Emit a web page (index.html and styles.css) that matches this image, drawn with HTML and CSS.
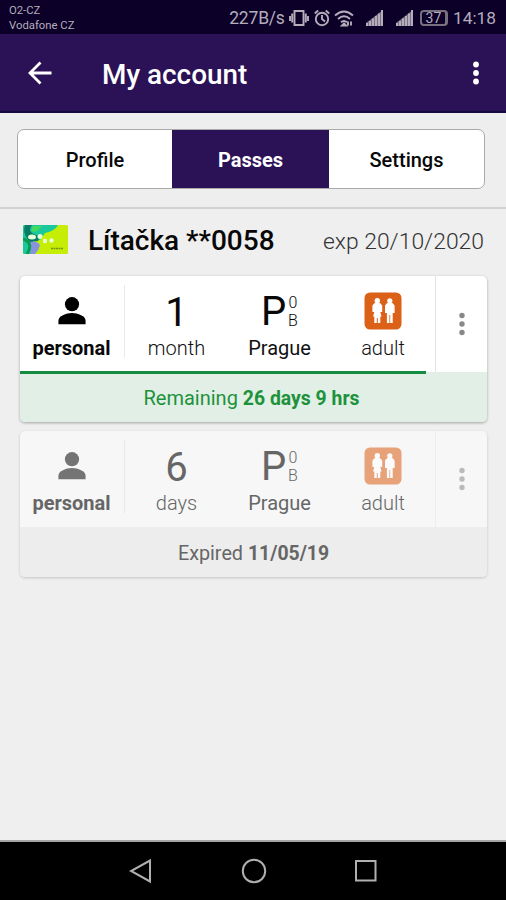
FILE: index.html
```html
<!DOCTYPE html>
<html lang="en">
<head>
<meta charset="utf-8">
<title>My account</title>
<link rel="stylesheet" href="styles.css">
</head>
<body>
<svg class="symbols" aria-hidden="true">
  <symbol id="person" viewBox="0 0 28 28"><circle cx="14" cy="7.2" r="7.1"/><path d="M.4 27.2v-3.500C.4 19 8 15.900 14 15.900s13.600 3.100 13.600 7.800v3.500z"/></symbol>
  <symbol id="adult" viewBox="0 0 38 38"><rect x=".5" y=".5" width="37" height="37" rx="5.500" fill="#dc6118"/><g fill="#fff"><circle cx="13.300" cy="8.800" r="2.700"/><path d="M10.600 11h5.400l2.200 2.500V20h-1.900l1.300 4.500h-1.300V31h-2.500v-5h-1v5h-2.500v-6.500H9L10.300 20H8.400v-6.500z"/><circle cx="25.800" cy="8.800" r="2.600"/><path d="M23.100 11h5.400l2.100 2.500V21h-1.900v10h-2.500v-8h-.8v8h-2.500V21H21v-7.500z"/></g></symbol>
  <symbol id="signal" viewBox="0 0 18 18"><path d="M0 14h2v3H0zM3 12h2v5H3zM6 9.500h2V17H6zM9 7h2v10H9zM12 4.500h2V17h-2zM15 1h2v16h-2z"/><path opacity=".65" d="M0 14 17 1v16H0z"/></symbol>
</svg>

<header class="status">
  <div class="carriers"><span>O2-CZ</span><span>Vodafone CZ</span></div>
  <span class="speed">227B/s</span>
  <svg class="vibrate" width="20" height="18" viewBox="0 0 20 18"><path d="M5.500 2h9v14h-9zM3.200 4.500v9M16.800 4.500v9M1 7v5M19 7v5"/></svg>
  <svg class="alarm" width="16" height="18" viewBox="0 0 16 18"><circle cx="8" cy="10" r="6.200"/><path d="M8 6v4l3 2.500M.8 4.500 4.200 1.500M15.200 4.500l-3.400-3"/></svg>
  <svg class="wifi" width="20" height="18" viewBox="0 0 20 18"><path d="M1 6.500Q10-1.500 19 6.500M4 10q6-5.300 12 0M7 13.300q3-2.700 6 0"/><path d="m10 14.500 2 2h-4zM14 12.500v4M17 12.500v4"/></svg>
  <svg class="signal one" width="18" height="18"><use href="#signal"/></svg>
  <svg class="signal two" width="18" height="18"><use href="#signal"/></svg>
  <span class="battery">37</span>
  <span class="clock">14:18</span>
</header>

<nav class="appbar">
  <svg class="back" width="24" height="24" viewBox="0 0 24 24"><path d="M23.500 12H2M12.500 1.500 2 12l10.500 10.500"/></svg>
  <h1><span>My account</span></h1>
  <svg class="more" width="8" height="24" viewBox="0 0 8 24"><circle cx="4" cy="3.500" r="2.900"/><circle cx="4" cy="12" r="2.900"/><circle cx="4" cy="20.500" r="2.900"/></svg>
</nav>

<section class="tabbar">
  <div class="tabs">
    <div class="tab">Profile</div>
    <div class="tab active">Passes</div>
    <div class="tab">Settings</div>
  </div>
</section>

<main>
  <div class="holder">
    <svg class="cardpic" width="45" height="29" viewBox="0 0 45 29">
      <defs><clipPath id="round"><rect width="45" height="29" rx="1.500"/></clipPath></defs>
      <g clip-path="url(#round)">
        <path fill="#c5ed06" d="M0 0h45v29H0z"/>
        <path fill="#19c99c" d="M0 0h35q-3 6-13 8l-5 7-7 1 4 7-5 6H0z"/>
        <path fill="#087b65" d="M2 0h7q-4 5 0 8t9 3l-3 5-8 1Q-1 9 2 0z"/>
        <path fill="#43d95d" d="M10 1h9l-5 5-4 1Q7 5 10 1z"/>
        <path fill="#8793df" d="M5 18q8-4 12 2-1 5-5 9H7q2-6-2-11z"/>
        <path fill="none" stroke="#099b4d" stroke-width="3" d="M0 14q11 4 4 15"/>
        <g fill="#e5ffd8"><ellipse cx="9" cy="12" rx="4" ry="2.500"/><circle cx="17" cy="11.500" r="2.500"/><circle cx="22" cy="16" r="2.200"/><circle cx="28.500" cy="15.500" r="2.200"/></g>
        <path stroke="#759b16" stroke-width="1.500" stroke-dasharray="2 .5" d="M28 23.500h12"/>
      </g>
    </svg>
    <h2>Lítačka **0058</h2>
    <span class="exp">exp 20/10/2020</span>
  </div>

  <article class="pass">
    <div class="cells">
      <div class="cell who"><div class="top"><svg width="28" height="28"><use href="#person"/></svg></div><b>personal</b></div>
      <div class="cell"><div class="top num">1</div><span>month</span></div>
      <div class="cell"><div class="top zone"><span>P</span><span class="bands"><i>0</i><i>B</i></span></div><span class="prague">Prague</span></div>
      <div class="cell"><div class="top"><svg width="38" height="38"><use href="#adult"/></svg></div><span>adult</span></div>
      <div class="menu"><svg width="6" height="24" viewBox="0 0 6 24"><circle cx="3" cy="3.500" r="2.700"/><circle cx="3" cy="12" r="2.700"/><circle cx="3" cy="20.500" r="2.700"/></svg></div>
    </div>
    <div class="foot"><span>Remaining <b>26 days 9 hrs</b></span></div>
  </article>

  <article class="pass expired">
    <div class="cells">
      <div class="cell who"><div class="top"><svg width="28" height="28"><use href="#person"/></svg></div><b>personal</b></div>
      <div class="cell"><div class="top num">6</div><span>days</span></div>
      <div class="cell"><div class="top zone"><span>P</span><span class="bands"><i>0</i><i>B</i></span></div><span class="prague">Prague</span></div>
      <div class="cell"><div class="top"><svg width="38" height="38"><use href="#adult"/></svg></div><span>adult</span></div>
      <div class="menu"><svg width="6" height="24" viewBox="0 0 6 24"><circle cx="3" cy="3.500" r="2.700"/><circle cx="3" cy="12" r="2.700"/><circle cx="3" cy="20.500" r="2.700"/></svg></div>
    </div>
    <div class="foot"><span>Expired <b>11/05/19</b></span></div>
  </article>
</main>

<footer class="sysnav">
  <svg width="24" height="26" viewBox="0 0 24 26"><path d="M21 2.500v21L2 13z"/></svg>
  <svg width="26" height="26" viewBox="0 0 26 26"><circle cx="13" cy="13" r="11.200"/></svg>
  <svg width="24" height="24" viewBox="0 0 24 24"><path d="M2 2h19.500v19.500H2z"/></svg>
</footer>
</body>
</html>
```
FILE: styles.css
```css
* { box-sizing: border-box; }
body {
  margin: 0;
  width: 506px;
  height: 900px;
  display: flex;
  flex-direction: column;
  overflow: hidden;
  background: #efefef;
  color: #080808;
  font-family: Roboto, "Liberation Sans", sans-serif;
}
h1, h2 { margin: 0; font-weight: 500; }
i { font-style: normal; }
b { font-weight: 700; }
svg { display: block; flex: none; }
.symbols { display: none; }

.status {
  height: 34px;
  flex: none;
  display: flex;
  align-items: center;
  padding: 2px 10px 0 9px;
  background: #0c0029;
  color: #b3aeba;
  white-space: nowrap;
}
.carriers { display: flex; flex-direction: column; width: 221px; font-size: 11.300px; line-height: 15.500px; }
.speed { width: 60px; font-size: 17.500px; letter-spacing: -.2px; }
.status svg { fill: none; stroke: #b3aeba; stroke-width: 1.900; }
.alarm { margin-left: 5px; }
.wifi { margin-left: 4px; }
.status .signal { fill: #b3aeba; stroke: none; }
.one { margin-left: 12px; }
.two { margin-left: 12px; }
.battery {
  width: 28px;
  height: 16px;
  margin: 0 5px 0 6px;
  border: 2px solid #77717f;
  border-right-width: 3px;
  border-radius: 4px;
  font-size: 14px;
  line-height: 12px;
  text-align: center;
}
.clock { font-size: 17.300px; }

.appbar {
  height: 79px;
  flex: none;
  display: flex;
  align-items: center;
  padding: 0 26px 0 28px;
  background: #2b1155;
  border-bottom: 2px solid #180941;
  color: #fff;
}
.back { fill: none; stroke: #fff; stroke-width: 2.800; margin-top: 1px; }
.appbar h1 { margin: 4px auto 0 50px; font-size: 27.900px; line-height: 32px; }
.more { fill: #fff; margin-top: 1px; }

.tabbar {
  height: 96px;
  flex: none;
  padding: 16px 21px 0 17px;
  background: #eee;
  border-bottom: 2px solid #d2d2d2;
}
.tabs {
  height: 60px;
  display: grid;
  grid-template-columns: 154px 157px 1fr;
  border: 1px solid #aaa;
  border-radius: 7px;
  background: #fff;
  overflow: hidden;
}
.tab { font-size: 20px; font-weight: 500; line-height: 60px; text-align: center; }
.tab.active { background: #2b1155; color: #fff; font-weight: 700; }

main { flex: 1; padding: 0 19px 0 20px; }
.holder { height: 67px; display: flex; align-items: center; padding: 0 3px; }
.cardpic { margin: -7px 20px 0 0; }
.holder h2 { font-size: 28px; line-height: 32px; margin-top: -4px; white-space: nowrap; }
.exp { margin: -2px 0 0 auto; font-size: 22.900px; font-weight: 300; color: #333; white-space: nowrap; }

.pass {
  height: 146px;
  margin-bottom: 9px;
  border-radius: 5px;
  background: #fff;
  box-shadow: 0 1px 3px rgba(0, 0, 0, .32);
  overflow: hidden;
}
.cells { height: 96px; display: grid; grid-template-columns: 105px 103px 103px 104px 1fr; }
.cell { text-align: center; font-size: 20px; line-height: 24px; padding-top: 15px; }
.cell > span { font-weight: 300; color: #111; }
.cell > .prague { font-weight: 400; }
.cell b { font-size: 20px; }
.who { padding-right: 2px; background: linear-gradient(#e9e9e9, #e9e9e9) right 9px / 1px 73px no-repeat; }
.top { height: 39px; margin-bottom: 6px; display: flex; align-items: center; justify-content: center; }
.num, .zone { font-size: 40px; line-height: 39px; }
.zone { gap: 3px; padding-top: 2px; }
.zone > span:first-child { width: 24px; }
.num { padding-top: 3px; }
.bands { display: flex; flex-direction: column; font-size: 16px; line-height: 18px; font-weight: 300; }
.menu { display: flex; align-items: center; justify-content: center; border-left: 1px solid #e5e5e5; fill: #888; }
.foot {
  position: relative;
  height: 50px;
  background: #e1efe6;
  color: #1d923b;
  font-size: 20px;
  line-height: 52px;
  text-align: center;
  padding-right: 4px;
}
.foot b { font-size: 19.400px; }
.foot::before { content: ""; position: absolute; left: 0; top: -1px; width: 406px; height: 3px; background: #168c42; }

.expired { background: #f7f7f7; box-shadow: 0 1px 3px rgba(0, 0, 0, .18); color: #666; }
.expired .cell > span { color: #666; }
.expired .who svg { fill: #747474; }
.expired .cell:nth-child(4) svg { opacity: .56; }
.expired .menu { fill: #bbb; border-color: #eee; }
.expired .foot { background: #ededed; color: #666; padding-right: 0; }
.expired .foot > span { font-size: 19.800px; }
.expired .foot::before { display: none; }

.sysnav {
  height: 60px;
  flex: none;
  display: flex;
  align-items: center;
  justify-content: space-between;
  padding: 0 128px 0 129px;
  background: #000;
  border-top: 2px solid #a5a5a5;
}
.sysnav svg { fill: none; stroke: #b0b0b0; stroke-width: 2; }
```
